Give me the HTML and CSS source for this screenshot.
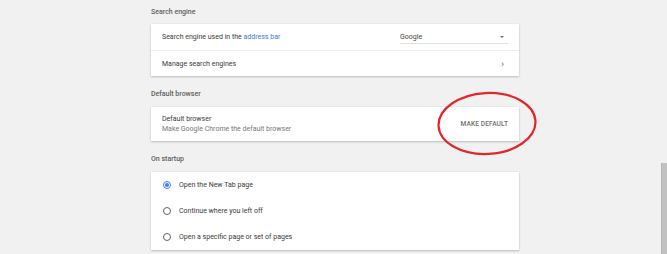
FILE: index.html
```html
<!DOCTYPE html>
<html>
<head>
<meta charset="utf-8">
<link rel="stylesheet" href="styles.css">
</head>
<body>
<div class="page">
  <div class="heading first">Search engine</div>
  <div class="card">
    <div class="row">
      <span>Search engine used in the <span class="link">address bar</span></span>
      <div class="select"><span>Google</span><span class="caret"></span></div>
    </div>
    <div class="row divided">
      <span>Manage search engines</span>
      <span class="chev">&#8250;</span>
    </div>
  </div>

  <div class="heading">Default browser</div>
  <div class="card">
    <div class="row tall">
      <div class="two">
        <span>Default browser</span>
        <span class="sub">Make Google Chrome the default browser</span>
      </div>
      <span class="btn">MAKE DEFAULT</span>
    </div>
  </div>

  <div class="heading">On startup</div>
  <div class="card">
    <div class="row radio-row"><span class="radio on"></span><span>Open the New Tab page</span></div>
    <div class="row radio-row"><span class="radio"></span><span>Continue where you left off</span></div>
    <div class="row radio-row"><span class="radio"></span><span>Open a specific page or set of pages</span></div>
  </div>
</div>

<svg class="circle" width="106" height="70" viewBox="0 0 106 70">
  <ellipse cx="53" cy="34.5" rx="48.5" ry="30.5" fill="none" stroke="#e3262c" stroke-width="2.2" transform="rotate(-3 53 34.5)"/>
</svg>
<div class="scrollbar"></div>
</body>
</html>
```

FILE: styles.css
```css
html, body {
  margin: 0;
  padding: 0;
  background: #f1f1f1;
  height: 100%;
  overflow: hidden;
}
body {
  font-family: Roboto, "Liberation Sans", sans-serif;
  font-size: 7px;
  color: #3a3a3a;
  position: relative;
}
.page {
  padding-left: 151px;
  width: 368px;
}
.heading {
  padding: 13px 0 8px 0;
  line-height: 10px;
  font-weight: 500;
  color: #606060;
}
.heading.first {
  padding-top: 7px;
  padding-bottom: 7px;
}
.card {
  background: #fff;
  box-shadow: 0 1px 2px rgba(0,0,0,0.22), 0 0 1px rgba(0,0,0,0.08);
}
.row {
  height: 26px;
  display: flex;
  align-items: center;
  justify-content: space-between;
  padding: 0 11px;
}
.row.divided {
  border-top: 1px solid #ececec;
  height: 25px;
}
.link { color: #4a72e0; }
.select {
  width: 108px;
  height: 12px;
  margin-top: 1px;
  border-bottom: 1px solid #e2e2e2;
  display: flex;
  justify-content: space-between;
  align-items: center;
  box-sizing: border-box;
  color: #444;
}
.caret {
  width: 0;
  height: 0;
  border-left: 2.5px solid transparent;
  border-right: 2.5px solid transparent;
  border-top: 2.5px solid #6a6a6a;
  margin-right: 4px;
}
.chev {
  font-size: 9px;
  color: #555;
  margin-right: 4px;
}
.row.tall {
  height: 34px;
}
.two {
  display: flex;
  flex-direction: column;
  line-height: 10px;
}
.sub { color: #777; }
.btn {
  font-weight: 500;
  color: #707070;
  font-size: 6.6px;
  letter-spacing: 0.1px;
}
.radio-row {
  justify-content: flex-start;
  padding-left: 12px;
  gap: 8px;
}
.radio {
  width: 6px;
  height: 6px;
  border: 1.3px solid #666;
  border-radius: 50%;
  box-sizing: content-box;
  position: relative;
  flex: none;
}
.radio.on { border-color: #4285f4; }
.radio.on::after {
  content: "";
  position: absolute;
  left: 1.3px;
  top: 1.3px;
  width: 3.4px;
  height: 3.4px;
  border-radius: 50%;
  background: #4285f4;
}
.circle {
  position: absolute;
  left: 434px;
  top: 89px;
}
.scrollbar {
  position: absolute;
  left: 661px;
  top: 163px;
  width: 6px;
  bottom: 0;
  background: #c1c1c1;
  border-left: 1px solid #b5b5b5;
}
```
